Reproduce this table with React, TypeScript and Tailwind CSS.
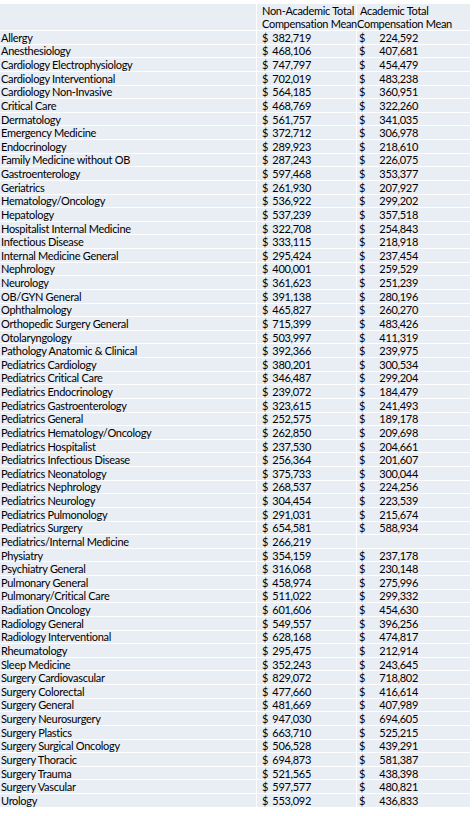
const rows: [string, string, string][] = [
  ["Allergy", "382,719", "224,592"],
  ["Anesthesiology", "468,106", "407,681"],
  ["Cardiology Electrophysiology", "747,797", "454,479"],
  ["Cardiology Interventional", "702,019", "483,238"],
  ["Cardiology Non-Invasive", "564,185", "360,951"],
  ["Critical Care", "468,769", "322,260"],
  ["Dermatology", "561,757", "341,035"],
  ["Emergency Medicine", "372,712", "306,978"],
  ["Endocrinology", "289,923", "218,610"],
  ["Family Medicine without OB", "287,243", "226,075"],
  ["Gastroenterology", "597,468", "353,377"],
  ["Geriatrics", "261,930", "207,927"],
  ["Hematology/Oncology", "536,922", "299,202"],
  ["Hepatology", "537,239", "357,518"],
  ["Hospitalist Internal Medicine", "322,708", "254,843"],
  ["Infectious Disease", "333,115", "218,918"],
  ["Internal Medicine General", "295,424", "237,454"],
  ["Nephrology", "400,001", "259,529"],
  ["Neurology", "361,623", "251,239"],
  ["OB/GYN General", "391,138", "280,196"],
  ["Ophthalmology", "465,827", "260,270"],
  ["Orthopedic Surgery General", "715,399", "483,426"],
  ["Otolaryngology", "503,997", "411,319"],
  ["Pathology Anatomic & Clinical", "392,366", "239,975"],
  ["Pediatrics Cardiology", "380,201", "300,534"],
  ["Pediatrics Critical Care", "346,487", "299,204"],
  ["Pediatrics Endocrinology", "239,072", "184,479"],
  ["Pediatrics Gastroenterology", "323,615", "241,493"],
  ["Pediatrics General", "252,575", "189,178"],
  ["Pediatrics Hematology/Oncology", "262,850", "209,698"],
  ["Pediatrics Hospitalist", "237,530", "204,661"],
  ["Pediatrics Infectious Disease", "256,364", "201,607"],
  ["Pediatrics Neonatology", "375,733", "300,044"],
  ["Pediatrics Nephrology", "268,537", "224,256"],
  ["Pediatrics Neurology", "304,454", "223,539"],
  ["Pediatrics Pulmonology", "291,031", "215,674"],
  ["Pediatrics Surgery", "654,581", "588,934"],
  ["Pediatrics/Internal Medicine", "266,219", ""],
  ["Physiatry", "354,159", "237,178"],
  ["Psychiatry General", "316,068", "230,148"],
  ["Pulmonary General", "458,974", "275,996"],
  ["Pulmonary/Critical Care", "511,022", "299,332"],
  ["Radiation Oncology", "601,606", "454,630"],
  ["Radiology General", "549,557", "396,256"],
  ["Radiology Interventional", "628,168", "474,817"],
  ["Rheumatology", "295,475", "212,914"],
  ["Sleep Medicine", "352,243", "243,645"],
  ["Surgery Cardiovascular", "829,072", "718,802"],
  ["Surgery Colorectal", "477,660", "416,614"],
  ["Surgery General", "481,669", "407,989"],
  ["Surgery Neurosurgery", "947,030", "694,605"],
  ["Surgery Plastics", "663,710", "525,215"],
  ["Surgery Surgical Oncology", "506,528", "439,291"],
  ["Surgery Thoracic", "694,873", "581,387"],
  ["Surgery Trauma", "521,565", "438,398"],
  ["Surgery Vascular", "597,577", "480,821"],
  ["Urology", "553,092", "436,833"],
];

// every cell shares the light spreadsheet fill; white gaps make the grid lines
const cell = "bg-[#e9edf4] flex items-center whitespace-nowrap";

export default function App() {
  return (
    <div
      className="w-[474px] h-[816px] bg-white pt-[4px] text-[11px] leading-none tracking-[-0.3px] text-black"
      style={{ fontFamily: "Lato, 'Noto Sans', sans-serif" }}
    >
      <div className="w-[470px] grid grid-cols-[256px_99px_113px] grid-rows-[26px] auto-rows-[12.63px] gap-px bg-white">
        {/* header */}
        <div className={cell} />
        <div className={`${cell} flex-col items-start justify-center gap-[1px] pl-[5px] leading-[12px]`}>
          <span>Non-Academic Total</span>
          <span>Compensation Mean</span>
        </div>
        <div className={`${cell} flex-col items-start justify-center gap-[1px] leading-[12px]`}>
          <span className="pl-[3px]">Academic Total</span>
          <span>Compensation Mean</span>
        </div>

        {rows.map(([name, a, b]) => (
          <Row key={name} name={name} a={a} b={b} />
        ))}
      </div>
    </div>
  );
}

function Row({ name, a, b }: { name: string; a: string; b: string }) {
  return (
    <>
      <div className={`${cell} pl-[1px]`}>{name}</div>
      <div className={`${cell} justify-between pl-[5px] pr-[45px]`}>
        <span>$</span>
        <span>{a}</span>
      </div>
      <div className={`${cell} justify-between pl-[2px] pr-[52px]`}>
        {b && (
          <>
            <span>$</span>
            <span>{b}</span>
          </>
        )}
      </div>
    </>
  );
}
